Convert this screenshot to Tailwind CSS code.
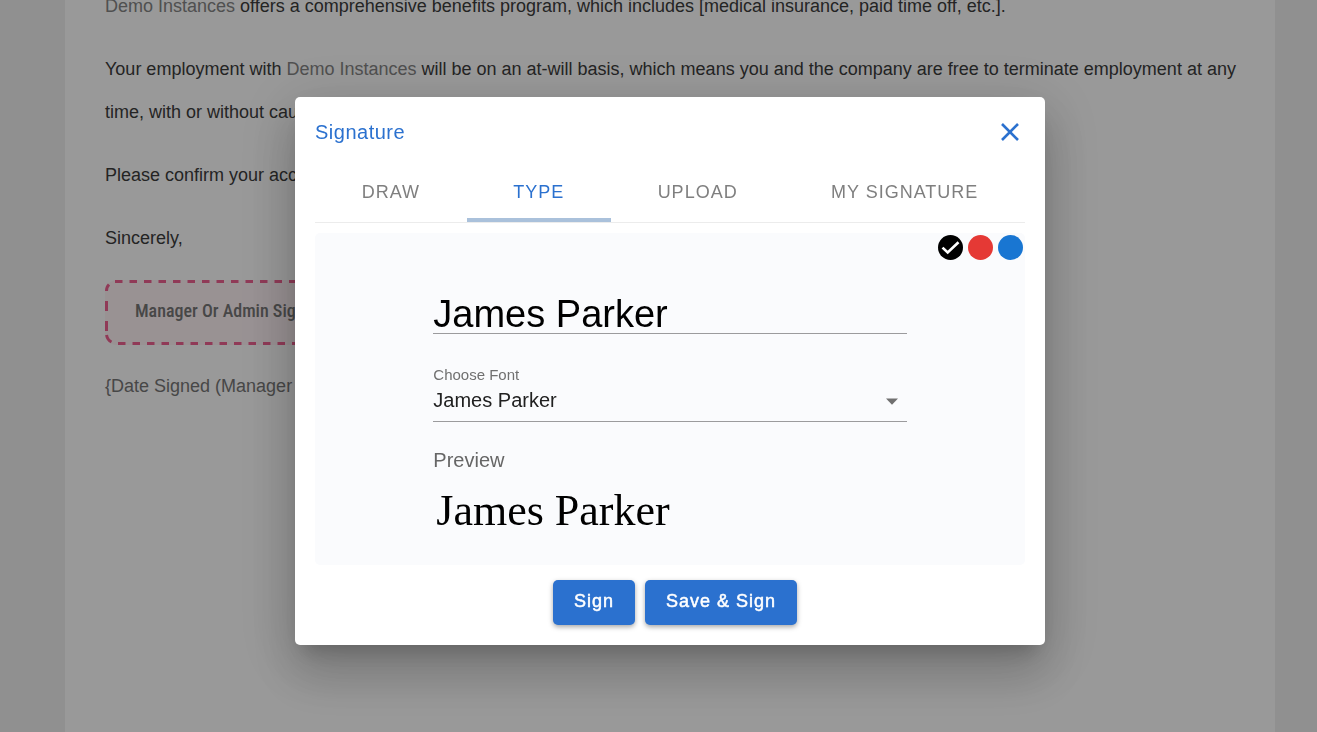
<!DOCTYPE html>
<html lang="en">
<head>
<meta charset="utf-8">
<meta name="viewport" content="width=device-width, initial-scale=1">
<title>Signature</title>
<script src="https://cdn.jsdelivr.net/npm/@tailwindcss/browser@4"></script>
</head>
<body class="h-screen overflow-hidden bg-[#f0f0f0] font-['Liberation_Sans',Arial,sans-serif]">
<main class="ml-[65px] mr-[42px] h-full overflow-hidden bg-white pl-10 pr-8">
  <div class="-mt-[15px] flex flex-col gap-5 text-[18px] leading-[43px] text-[#3c3c3c]">
    <p><span class="text-[#858585]">Demo Instances</span> offers a comprehensive benefits program, which includes [medical insurance, paid time off, etc.].</p>
    <p>Your employment with <span class="text-[#858585]">Demo Instances</span> will be on an at-will basis, which means you and the company are free to terminate employment at any time, with or without cause or notice.</p>
    <p>Please confirm your acceptance of this offer by signing below.</p>
    <p>Sincerely,</p>
    <div class="relative flex h-[65px] w-80 items-center rounded-xl bg-[#fff3f6] px-[30px] pb-1">
      <svg class="absolute inset-0 size-full" fill="none" stroke="#f06292" stroke-width="3" aria-hidden="true">
        <path stroke-dasharray="7.5 7" d="M10 1.500H310M13 63.500H310"/>
        <path d="M4 4.500Q1.500 7 1.500 11M1.500 21V31M1.500 41V51M1.500 55Q2.500 60 6.500 62"/>
      </svg>
      <span class="whitespace-nowrap font-['Roboto_Condensed',Roboto,sans-serif] text-[18px] font-medium leading-6 text-[#777]">Manager Or Admin Signature</span>
    </div>
    <p class="text-[#777]">{Date Signed (Manager Or Admin)}</p>
  </div>
</main>

<div class="fixed inset-0 flex items-center justify-center bg-black/40 pl-[23px] pt-[10px]">
  <section role="dialog" aria-modal="true" aria-labelledby="title" class="w-full max-w-[750px] rounded-[5px] bg-white px-5 pb-5 shadow-[0_14px_19px_-9px_rgba(0,0,0,0.2),0_30px_48px_4px_rgba(0,0,0,0.14),0_11px_58px_10px_rgba(0,0,0,0.12)]">
    <header class="flex h-[70px] items-center justify-between">
      <h2 id="title" class="text-[20px] leading-[30px] tracking-wide text-[#2b71cf]">Signature</h2>
      <button type="button" aria-label="Close" class="text-[#2b71cf]">
        <svg class="size-[30px]" viewBox="0 0 30 30" fill="none" stroke="currentColor" stroke-width="2.6" aria-hidden="true"><path d="M7 7 23 23M23 7 7 23"/></svg>
      </button>
    </header>
    <div role="tablist" class="flex h-14 border-b border-[#ececec] text-[18px] leading-6 tracking-[1px] text-[#7f7f7f]">
      <button type="button" role="tab" class="grow pb-1.5">DRAW</button>
      <button type="button" role="tab" aria-selected="true" class="grow border-b-4 border-[#aac1db] pb-0.5 text-[#2b71cf]">TYPE</button>
      <button type="button" role="tab" class="grow pb-1.5">UPLOAD</button>
      <button type="button" role="tab" class="grow pb-1.5">MY SIGNATURE</button>
    </div>
    <form class="mt-[10px]">
      <div class="rounded-[5px] bg-[#fafbfd] pb-7">
        <div class="flex justify-end gap-[5px] px-[2px] pt-[2px]">
          <button type="button" aria-label="Black" class="flex size-[25px] items-center justify-center rounded-full bg-black">
            <svg class="size-[25px]" viewBox="0 0 25 25" fill="none" stroke="#fff" stroke-width="2.6" aria-hidden="true"><path d="m4.500 12.600 5.200 4.900L20.500 7.200"/></svg>
          </button>
          <button type="button" aria-label="Red" class="size-[25px] rounded-full bg-[#e53935]"></button>
          <button type="button" aria-label="Blue" class="size-[25px] rounded-full bg-[#1976d2]"></button>
        </div>
        <div class="mx-auto w-2/3">
          <input type="text" aria-label="Signature text" value="James Parker" class="mt-8 block h-[42px] w-full border-b border-[#9b9b9d] bg-transparent pt-1 text-[38px] leading-9 text-black outline-none">
          <label for="font" class="mt-[31px] block text-[15px] leading-5 text-[#707070]">Choose Font</label>
          <div class="relative">
            <select id="font" class="block h-[37px] w-full appearance-none border-b border-[#9b9b9d] bg-transparent pb-[7px] text-[20px] leading-6 text-[#212121] outline-none"><option>James Parker</option></select>
            <svg class="pointer-events-none absolute right-[9px] top-[13px] h-[7px] w-3" viewBox="0 0 12 7" fill="#707070" aria-hidden="true"><path d="M0 .5h12L6 6.800z"/></svg>
          </div>
          <p class="mt-[23px] text-[20px] leading-[30px] text-[#666]">Preview</p>
          <p class="px-[3px] pt-[10px] font-['Liberation_Serif',serif] text-[44px] leading-[52px] text-black">James Parker</p>
        </div>
      </div>
      <div class="mt-[15px] flex justify-center text-[18px] tracking-[1px] text-white [-webkit-text-stroke:0.5px_white]">
        <button type="button" class="ml-[10px] h-[45px] rounded-[5px] bg-[#2b71cf] px-[21px] pb-0.5 shadow-[0_2px_5px_rgba(0,0,0,0.35)]">Sign</button>
        <button type="button" class="ml-[10px] h-[45px] rounded-[5px] bg-[#2b71cf] px-[21px] pb-0.5 shadow-[0_2px_5px_rgba(0,0,0,0.35)]">Save &amp; Sign</button>
      </div>
    </form>
  </section>
</div>
</body>
</html>
